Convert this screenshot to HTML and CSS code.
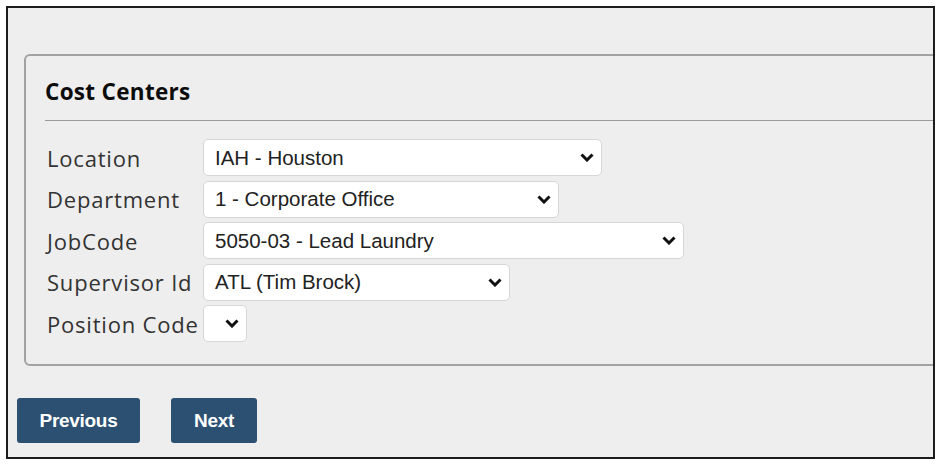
FILE: index.html
```html
<html>
	<head>
	<title>Cost Centers</title>
	<link rel="stylesheet" href="styles.css">
	</head>
	<body>
<div class="frame">
	<div class="panel">
		<h3 class="panel-title">Cost Centers</h3>
		<hr class="rule">
		<div class="rows">
			<label class="lbl">Location</label>
			<div class="sel w-loc"><span>IAH - Houston</span><svg class="chev" viewBox="0 0 14 9"><path d="M1.5 1.5 L7 7 L12.5 1.5"/></svg></div>

			<label class="lbl">Department</label>
			<div class="sel w-dept"><span>1 - Corporate Office</span><svg class="chev" viewBox="0 0 14 9"><path d="M1.5 1.5 L7 7 L12.5 1.5"/></svg></div>

			<label class="lbl">JobCode</label>
			<div class="sel w-job"><span>5050-03 - Lead Laundry</span><svg class="chev" viewBox="0 0 14 9"><path d="M1.5 1.5 L7 7 L12.5 1.5"/></svg></div>

			<label class="lbl">Supervisor Id</label>
			<div class="sel w-sup"><span>ATL (Tim Brock)</span><svg class="chev" viewBox="0 0 14 9"><path d="M1.5 1.5 L7 7 L12.5 1.5"/></svg></div>

			<label class="lbl">Position Code</label>
			<div class="sel w-pos"><span></span><svg class="chev" viewBox="0 0 14 9"><path d="M1.5 1.5 L7 7 L12.5 1.5"/></svg></div>
		</div>
	</div>

	<div class="actions">
		<button class="btn btn-prev">Previous</button>
		<button class="btn btn-next">Next</button>
	</div>
</div>
	</body>
</html>
```
FILE: styles.css
```css
body {
	margin: 0;
	background: #fff;
}
.frame {
	margin: 6px 0 0 6px;
	width: 925px;
	height: 449px;
	border: 2px solid #1c1c1c;
	background: #eeeeee;
	overflow: hidden;
}
.panel {
	margin: 46px -30px 0 16px;
	height: 308px;
	border: 2px solid #a2a2a2;
	border-radius: 6px;
	padding: 0 0 0 19px;
}
.panel-title {
	margin: 0;
	padding-top: 21px;
	font-family: "Open Sans", "Liberation Sans", sans-serif;
	font-weight: bold;
	font-size: 22.5px;
	letter-spacing: 0.3px;
	line-height: 30px;
	color: #0c0c0c;
}
.rule {
	margin: 13px 0 0;
	border: 0;
	border-top: 1px solid #9a9a9a;
}
.rows {
	margin-top: 18px;
	display: grid;
	grid-template-columns: 158px auto;
	justify-content: start;
	row-gap: 4.5px;
	align-items: center;
}
.lbl {
	padding-left: 2px;
	font-family: "Open Sans", "Liberation Sans", sans-serif;
	font-size: 22px;
	letter-spacing: 0.8px;
	color: #333;
	white-space: nowrap;
}
.sel {
	height: 35px;
	box-sizing: content-box;
	border: 1px solid #d6d6d6;
	border-radius: 5px;
	background: #fff;
	display: flex;
	align-items: center;
	justify-content: space-between;
	padding: 0 7px 0 11px;
	font-family: "Liberation Sans", Arial, sans-serif;
	font-size: 20.5px;
	color: #222;
}
.chev {
	width: 14px;
	height: 9px;
	flex: none;
}
.chev path {
	fill: none;
	stroke: #111;
	stroke-width: 3;
}
.w-loc { width: 379px; }
.w-dept { width: 336px; }
.w-job { width: 461px; }
.w-sup { width: 287px; }
.w-pos { width: 24px; padding-left: 11px; }

.actions {
	margin: 32px 0 0 9px;
	display: flex;
	gap: 31px;
}
.btn {
	height: 45px;
	border: 0;
	border-radius: 3px;
	background: #2c5072;
	color: #fff;
	font-family: "Liberation Sans", Arial, sans-serif;
	font-weight: bold;
	font-size: 19px;
	letter-spacing: -0.3px;
}
.btn-prev { width: 123px; }
.btn-next { width: 86px; }
```
